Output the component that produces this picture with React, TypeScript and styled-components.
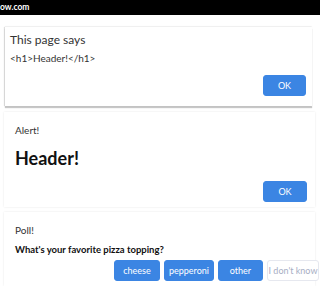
import React from 'react'
import styled, { createGlobalStyle } from 'styled-components'

const Global = createGlobalStyle`
    body {
        margin: 0;
        background: #fff;
        font-family: Lato, 'Open Sans', sans-serif;
    }
`

const TopBar = styled.div`
    height: 15px;
    background: #000;
    color: #fff;
    font-size: 8.5px;
    font-weight: 700;
    line-height: 15px;
    white-space: nowrap;
    overflow: hidden;
`

const Stack = styled.div`
    display: flex;
    flex-direction: column;
    padding: 12px 5px 0 4px;
`

const Card = styled.div<{ $native?: boolean; $gap: number }>`
    background: #fff;
    margin-left: ${(p) => (p.$native ? '1px' : '0')};
    margin-right: ${(p) => (p.$native ? '3px' : '0')};
    margin-bottom: ${(p) => p.$gap}px;
    box-shadow: ${(p) =>
        p.$native
            ? '-1px 0 1px rgba(0,0,0,0.12), 0 2px 1px rgba(0,0,0,0.22), 0 -1px 1px rgba(0,0,0,0.04)'
            : '0 0 2px rgba(0,0,0,0.1)'};
    padding: ${(p) => (p.$native ? '5px 6px 10px 5px' : '10px 8px 5px 11px')};
    display: flex;
    flex-direction: column;
`

const Title = styled.div<{ $size: number }>`
    font-size: ${(p) => p.$size}px;
    color: #333;
    line-height: ${(p) => (p.$size > 11 ? 16 : 17)}px;
`

const Message = styled.div`
    font-size: 10px;
    color: #333;
    margin-top: 3px;
    line-height: 14px;
`

const Heading = styled.div`
    font-size: 18px;
    font-weight: 700;
    color: #111;
    margin-top: 7px;
    line-height: 24px;
`

const Question = styled.div`
    font-size: 9.5px;
    font-weight: 700;
    color: #111;
    margin-top: 3px;
    line-height: 15px;
`

const Actions = styled.div<{ $top: number; $bleed?: number }>`
    display: flex;
    justify-content: flex-end;
    gap: 4px;
    margin-top: ${(p) => p.$top}px;
    margin-right: ${(p) => -(p.$bleed ?? 0)}px;
`

const Btn = styled.button<{ $w: number; $ghost?: boolean }>`
    width: ${(p) => p.$w}px;
    height: 21px;
    padding: 0;
    border-radius: 3px;
    border: 1px solid ${(p) => (p.$ghost ? '#e6e8ef' : '#3b85e3')};
    background: ${(p) => (p.$ghost ? '#fff' : '#3b85e3')};
    color: ${(p) => (p.$ghost ? '#a7aec4' : '#fff')};
    font-family: Lato, 'Open Sans', sans-serif;
    font-size: 9px;
    white-space: nowrap;
    flex-shrink: 0;
    display: flex;
    align-items: center;
    justify-content: center;
`

const App: React.FC = () => {
    return (
        <>
            <Global />
            <TopBar>ow.com</TopBar>
            <Stack>
                <Card $native $gap={6}>
                    <Title $size={12}>This page says</Title>
                    <Message>&lt;h1&gt;Header!&lt;/h1&gt;</Message>
                    <Actions $top={10}>
                        <Btn $w={43}>OK</Btn>
                    </Actions>
                </Card>
                <Card $gap={5}>
                    <Title $size={10}>Alert!</Title>
                    <Heading>Header!</Heading>
                    <Actions $top={11}>
                        <Btn $w={44}>OK</Btn>
                    </Actions>
                </Card>
                <Card $gap={0}>
                    <Title $size={10}>Poll!</Title>
                    <Question>What's your favorite pizza topping?</Question>
                    <Actions $top={3} $bleed={12}>
                        <Btn $w={46}>cheese</Btn>
                        <Btn $w={50}>pepperoni</Btn>
                        <Btn $w={45}>other</Btn>
                        <Btn $w={52} $ghost>I don't know</Btn>
                    </Actions>
                </Card>
            </Stack>
        </>
    )
}

export default App
